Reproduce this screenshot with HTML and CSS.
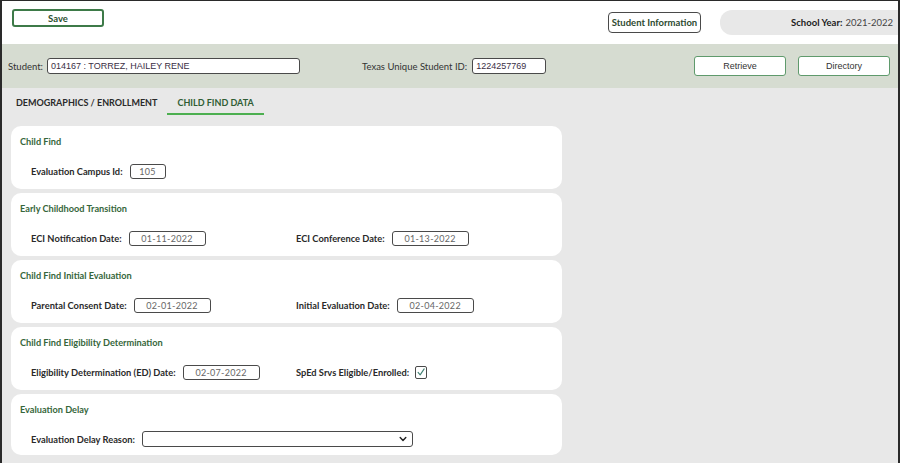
FILE: index.html
```html
<!DOCTYPE html>
<html lang="en">
<head>
<meta charset="utf-8">
<title>Child Find Data</title>
<link rel="stylesheet" href="styles.css">
</head>
<body>
<div class="frame">
  <header class="topbar">
    <button class="btn-save">Save</button>
    <div class="top-right">
      <button class="btn-info">Student Information</button>
      <div class="school-year"><b>School Year:</b> 2021-2022</div>
    </div>
  </header>

  <section class="student-bar">
    <span class="bar-label">Student:</span>
    <div class="field-box student-input">014167 : TORREZ, HAILEY RENE</div>
    <span class="bar-label tsid-label">Texas Unique Student ID:</span>
    <div class="field-box tsid-input">1224257769</div>
    <div class="bar-actions">
      <button class="btn-outline">Retrieve</button>
      <button class="btn-outline">Directory</button>
    </div>
  </section>

  <main class="content">
    <nav class="tabs">
      <span class="tab">DEMOGRAPHICS / ENROLLMENT</span>
      <span class="tab active">CHILD FIND DATA</span>
    </nav>

    <div class="cards">
      <section class="card">
        <h2 class="card-title">Child Find</h2>
        <div class="row">
          <div class="field">
            <span class="label">Evaluation Campus Id:</span>
            <span class="input campus">105</span>
          </div>
        </div>
      </section>

      <section class="card">
        <h2 class="card-title">Early Childhood Transition</h2>
        <div class="row">
          <div class="field col1">
            <span class="label">ECI Notification Date:</span>
            <span class="input date">01-11-2022</span>
          </div>
          <div class="field">
            <span class="label">ECI Conference Date:</span>
            <span class="input date">01-13-2022</span>
          </div>
        </div>
      </section>

      <section class="card">
        <h2 class="card-title">Child Find Initial Evaluation</h2>
        <div class="row">
          <div class="field col1">
            <span class="label">Parental Consent Date:</span>
            <span class="input date">02-01-2022</span>
          </div>
          <div class="field">
            <span class="label">Initial Evaluation Date:</span>
            <span class="input date">02-04-2022</span>
          </div>
        </div>
      </section>

      <section class="card">
        <h2 class="card-title">Child Find Eligibility Determination</h2>
        <div class="row">
          <div class="field col1">
            <span class="label">Eligibility Determination (ED) Date:</span>
            <span class="input date">02-07-2022</span>
          </div>
          <div class="field">
            <span class="label">SpEd Srvs Eligible/Enrolled:</span>
            <span class="checkbox">
              <svg viewBox="0 0 12 12" width="10" height="10"><path d="M2.5 6.5 L5 9.5 L9.8 2.2" fill="none" stroke="#3f7f72" stroke-width="1.3" stroke-linecap="round" stroke-linejoin="round"/></svg>
            </span>
          </div>
        </div>
      </section>

      <section class="card">
        <h2 class="card-title">Evaluation Delay</h2>
        <div class="row">
          <div class="field">
            <span class="label">Evaluation Delay Reason:</span>
            <span class="select">
              <svg viewBox="0 0 10 10" width="8" height="8"><path d="M1.5 3.2 L5 6.8 L8.5 3.2" fill="none" stroke="#222" stroke-width="1.8" stroke-linecap="round" stroke-linejoin="round"/></svg>
            </span>
          </div>
        </div>
      </section>
    </div>
  </main>
</div>
</body>
</html>
```

FILE: styles.css
```css
* { box-sizing: border-box; }

html, body {
  margin: 0;
  padding: 0;
  background: #ffffff;
}

body {
  font-family: Lato, "Open Sans", "Liberation Sans", sans-serif;
  font-size: 9px;
  color: #222;
}

.frame {
  width: 900px;
  height: 463px;
  border-left: 2px solid #2a2a2a;
  border-top: 1px solid #2a2a2a;
  border-right: 2px solid #2a2a2a;
  display: flex;
  flex-direction: column;
  overflow: hidden;
  background: #e8e8e8;
}

button {
  font-family: inherit;
  cursor: pointer;
  padding: 0;
}

/* ---------- top bar ---------- */
.topbar {
  height: 43px;
  background: #ffffff;
  display: flex;
  align-items: flex-start;
  padding-left: 10px;
  flex-shrink: 0;
}

.btn-save {
  margin-top: 8px;
  width: 92px;
  height: 18px;
  background: #fff;
  border: 2px solid #3d7a48;
  border-radius: 3px;
  color: #2b4f2f;
  font-size: 9.5px;
  font-weight: 700;
}

.top-right {
  margin-left: auto;
  display: flex;
  align-items: flex-start;
  gap: 19px;
}

.btn-info {
  margin-top: 11px;
  width: 93px;
  height: 21px;
  background: #fff;
  border: 1.5px solid #4a4a4a;
  border-radius: 4px;
  color: #2d4a30;
  font-size: 9.5px;
  font-weight: 700;
}

.school-year {
  margin-top: 9px;
  width: 178px;
  height: 25px;
  background: #e8e8e8;
  border-radius: 12px 0 0 12px;
  display: flex;
  align-items: center;
  justify-content: flex-end;
  padding-right: 5px;
  font-size: 9.5px;
  color: #444;
}

.school-year b {
  color: #1c1c1c;
  font-weight: 700;
  margin-right: 3px;
}

/* ---------- student bar ---------- */
.student-bar {
  height: 44px;
  background: #d6dcd1;
  display: flex;
  align-items: center;
  padding-left: 6px;
  padding-right: 8px;
  flex-shrink: 0;
}

.bar-label {
  font-size: 9.5px;
  color: #333;
}

.field-box {
  height: 16px;
  background: #fff;
  border: 1.5px solid #4a4a4a;
  border-radius: 3px;
  font-family: "Liberation Sans", Arial, sans-serif;
  font-size: 9px;
  color: #3a2f45;
  display: flex;
  align-items: center;
  padding-left: 3px;
}

.student-input {
  margin-left: 4px;
  width: 253px;
}

.tsid-label {
  margin-left: 62px;
}

.tsid-input {
  margin-left: 5px;
  width: 74px;
}

.bar-actions {
  margin-left: auto;
  display: flex;
  gap: 12px;
}

.btn-outline {
  width: 92px;
  height: 20px;
  background: #fff;
  border: 1.5px solid #5f9a6c;
  border-radius: 3px;
  font-family: "Liberation Sans", Arial, sans-serif;
  font-size: 9px;
  color: #333;
}

/* ---------- content ---------- */
.content {
  flex: 1;
  background: #e8e8e8;
}

.tabs {
  display: flex;
  padding-left: 4px;
  height: 27px;
}

.tab {
  padding: 9px 10px 0;
  height: 27px;
  font-size: 9px;
  font-weight: 700;
  color: #2a2a2a;
}

.tab.active {
  color: #2f5d34;
  border-bottom: 2px solid #4caf50;
}

.cards {
  margin-top: 11px;
  margin-left: 9px;
  width: 551px;
  display: flex;
  flex-direction: column;
  gap: 4px;
}

.card {
  background: #fff;
  border-radius: 10px;
  height: 63px;
  padding: 10px 9px 0;
}

.card:last-child {
  height: 61px;
}

.card-title {
  margin: 0;
  height: 12px;
  line-height: 12px;
  font-size: 9.2px;
  font-weight: 700;
  color: #36663b;
}

.row {
  margin-top: 15px;
  padding-left: 11px;
  display: flex;
  align-items: center;
  height: 16px;
}

.field {
  display: flex;
  align-items: center;
  gap: 7px;
}

.field.col1 {
  width: 265px;
}

.label {
  font-size: 9.3px;
  font-weight: 700;
  color: #2a2a2a;
}

.input {
  height: 15px;
  border: 1.2px solid #4a4a4a;
  border-radius: 3px;
  background: #fff;
  font-size: 9px;
  color: #666;
  display: flex;
  align-items: center;
  justify-content: center;
  letter-spacing: 0.3px;
}

.input.campus {
  width: 36px;
}

.input.date {
  width: 77px;
}

.checkbox {
  width: 12px;
  height: 13px;
  border: 1.2px solid #4a4a4a;
  border-radius: 2px;
  background: #fff;
  display: flex;
  align-items: center;
  justify-content: center;
  margin-left: -1px;
}

.select {
  width: 271px;
  height: 16px;
  border: 1.2px solid #4a4a4a;
  border-radius: 3px;
  background: #fff;
  display: flex;
  align-items: center;
  justify-content: flex-end;
  padding-right: 5px;
}
```
